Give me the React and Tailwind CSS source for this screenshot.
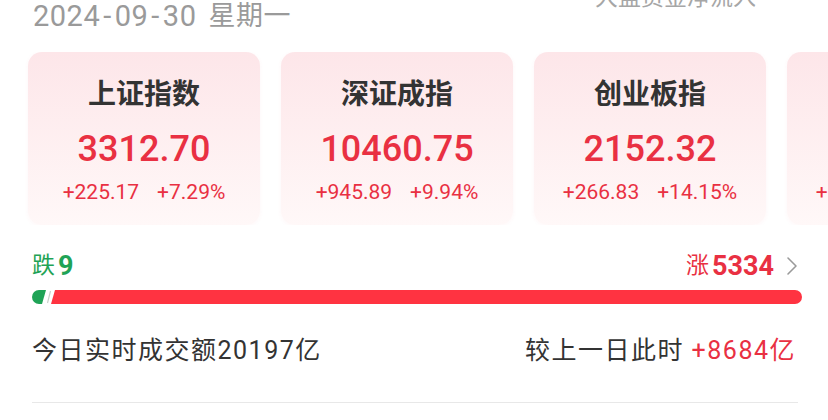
import React from 'react';

const FONT = "font-['Roboto','Noto_Sans_CJK_SC',sans-serif]";

const indices = [
  { name: '上证指数', value: '3312.70', change: '+225.17', pct: '+7.29%' },
  { name: '深证成指', value: '10460.75', change: '+945.89', pct: '+9.94%' },
  { name: '创业板指', value: '2152.32', change: '+266.83', pct: '+14.15%' },
  { name: '北证50', value: '1138.72', change: '+110.62', pct: '+10.76%' },
];

function IndexCard({ item }) {
  return (
    <div className="w-[232px] h-[173px] shrink-0 rounded-[14px] bg-gradient-to-b from-[#fde6e9] to-[#fff8f8] shadow-[0_1px_4px_rgba(240,80,100,0.05)] flex flex-col items-center pt-[29px]">
      <div className="text-[28px] leading-[28px] font-semibold text-[#333333]">{item.name}</div>
      <div className="mt-[22px] text-[36px] leading-[36px] font-medium text-[#e93042]">{item.value}</div>
      <div className="mt-[15px] flex gap-[18px] text-[21px] leading-[21px] text-[#e93042]">
        <span>{item.change}</span>
        <span>{item.pct}</span>
      </div>
    </div>
  );
}

export default function App() {
  return (
    <div className={`w-[828px] h-[420px] overflow-hidden bg-white ${FONT}`}>
      {/* header */}
      <div className="flex justify-between items-start">
        <div className="pl-[33px] mt-[2px] h-[29px] flex items-center text-[29px] leading-[29px] text-[#9a9a9a] tracking-[0.5px]">
          <span>2024<span className="mx-[3px]">-</span>09<span className="mx-[3px]">-</span>30</span>
          <span className="ml-[12px] text-[27px] tracking-[0.5px]">星期一</span>
        </div>
        <div className="mr-[72px] -mt-[14px] text-[23px] leading-[23px] text-[#a6a6a6]">大盘资金净流入</div>
      </div>

      {/* index cards */}
      <div className="mt-[21px] pl-[28px] flex gap-[21px] overflow-hidden">
        {indices.map((it) => (
          <IndexCard key={it.name} item={it} />
        ))}
      </div>

      {/* rise / fall */}
      <div className="mt-[29px] pl-[32px] pr-[26px]">
        <div className="flex justify-between items-center h-[24px]">
          <div className="flex items-center text-[23px] leading-[24px] text-[#1fa356]">
            <span>跌</span>
            <span className="ml-[3px] text-[27px] font-bold">9</span>
          </div>
          <div className="flex items-center text-[23px] leading-[24px] text-[#e93042] pr-[4px]">
            <span>涨</span>
            <span className="ml-[3px] text-[27px] font-bold">5334</span>
            <svg className="ml-[12px]" width="12" height="20" viewBox="0 0 12 20" fill="none">
              <path d="M2 2l8 8-8 8" stroke="#9a9a9a" strokeWidth="1.6" strokeLinecap="round" strokeLinejoin="round" />
            </svg>
          </div>
        </div>

        <div className="mt-[12px] h-[14px] flex">
          <div className="w-[14px] bg-[#1fa356] rounded-l-full [clip-path:polygon(0_0,100%_0,calc(100%_-_4px)_100%,0_100%)]" />
          <svg width="6" height="14" viewBox="0 0 6 14" className="shrink-0">
            <path d="M4.5 1L1.5 13" stroke="#c9cfc9" strokeWidth="1.2" />
          </svg>
          <div className="flex-1 bg-[#ff3341] rounded-r-full -ml-[1px] [clip-path:polygon(4px_0,100%_0,100%_100%,0_100%)]" />
        </div>

        {/* turnover */}
        <div className="mt-[34px] flex justify-between items-center text-[25px] leading-[26px] text-[#333333] tracking-[1.5px]">
          <div>今日实时成交额20197亿</div>
          <div className="pr-[6px]">
            较上一日此时 <span className="text-[#e93042]">+8684亿</span>
          </div>
        </div>

        <div className="mt-[38px] mr-[4px] h-px bg-[#e8e8e8]" />
      </div>
    </div>
  );
}
